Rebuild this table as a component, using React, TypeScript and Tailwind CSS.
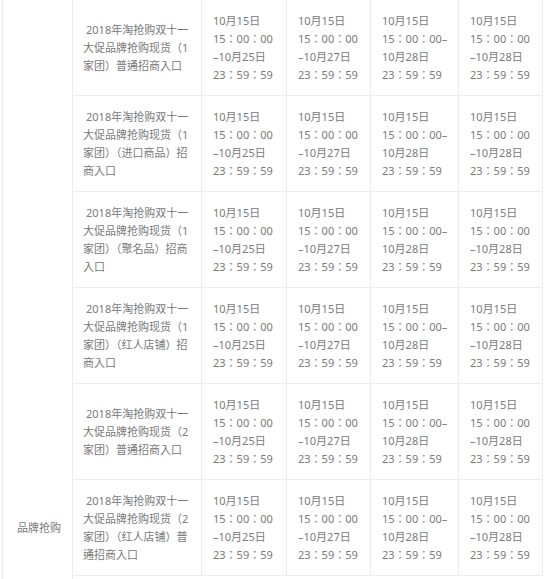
import React from 'react';

const titles: string[][] = [
  ['2018年淘抢购双十一', '大促品牌抢购现货（1', '家团）普通招商入口'],
  ['2018年淘抢购双十一', '大促品牌抢购现货（1', '家团）（进口商品）招', '商入口'],
  ['2018年淘抢购双十一', '大促品牌抢购现货（1', '家团）（聚名品）招商', '入口'],
  ['2018年淘抢购双十一', '大促品牌抢购现货（1', '家团）（红人店铺）招', '商入口'],
  ['2018年淘抢购双十一', '大促品牌抢购现货（2', '家团）普通招商入口'],
  ['2018年淘抢购双十一', '大促品牌抢购现货（2', '家团）（红人店铺）普', '通招商入口'],
];

const dates: string[][] = [
  ['10月15日', '15：00：00', '–10月25日', '23：59：59'],
  ['10月15日', '15：00：00', '–10月27日', '23：59：59'],
  ['10月15日', '15：00：00–', '10月28日', '23：59：59'],
  ['10月15日', '15：00：00', '–10月28日', '23：59：59'],
];

const Lines: React.FC<{ lines: string[]; indent?: boolean }> = ({ lines, indent }) => (
  <div>
    {lines.map((l, i) => (
      <div key={i} className={i === 0 && indent ? 'pl-[3px]' : ''}>
        {l}
      </div>
    ))}
  </div>
);

export default function App() {
  return (
    <div className="w-[549px] h-[579px] overflow-hidden bg-white font-['Noto_Sans','Noto_Sans_CJK_TC',sans-serif] text-[11px] leading-[18px] text-[#7a7a7a]">
      <div className="ml-[2px] grid grid-cols-[71px_129px_85px_84px_88px_84px] grid-rows-[repeat(6,96px)_20px]">
        <div className="row-span-7 border-x border-[#ededed] flex items-end justify-center pb-[59px] pl-[3px]">
          品牌抢购
        </div>
        {titles.map((t, r) => (
          <React.Fragment key={r}>
            <div className="border-r border-b border-[#ededed] flex items-center px-[10px]">
              <Lines lines={t} indent />
            </div>
            {dates.map((d, c) => (
              <div key={c} className="border-r border-b border-[#ededed] flex items-center pl-[11px]">
                <Lines lines={d} />
              </div>
            ))}
          </React.Fragment>
        ))}
      </div>
    </div>
  );
}
